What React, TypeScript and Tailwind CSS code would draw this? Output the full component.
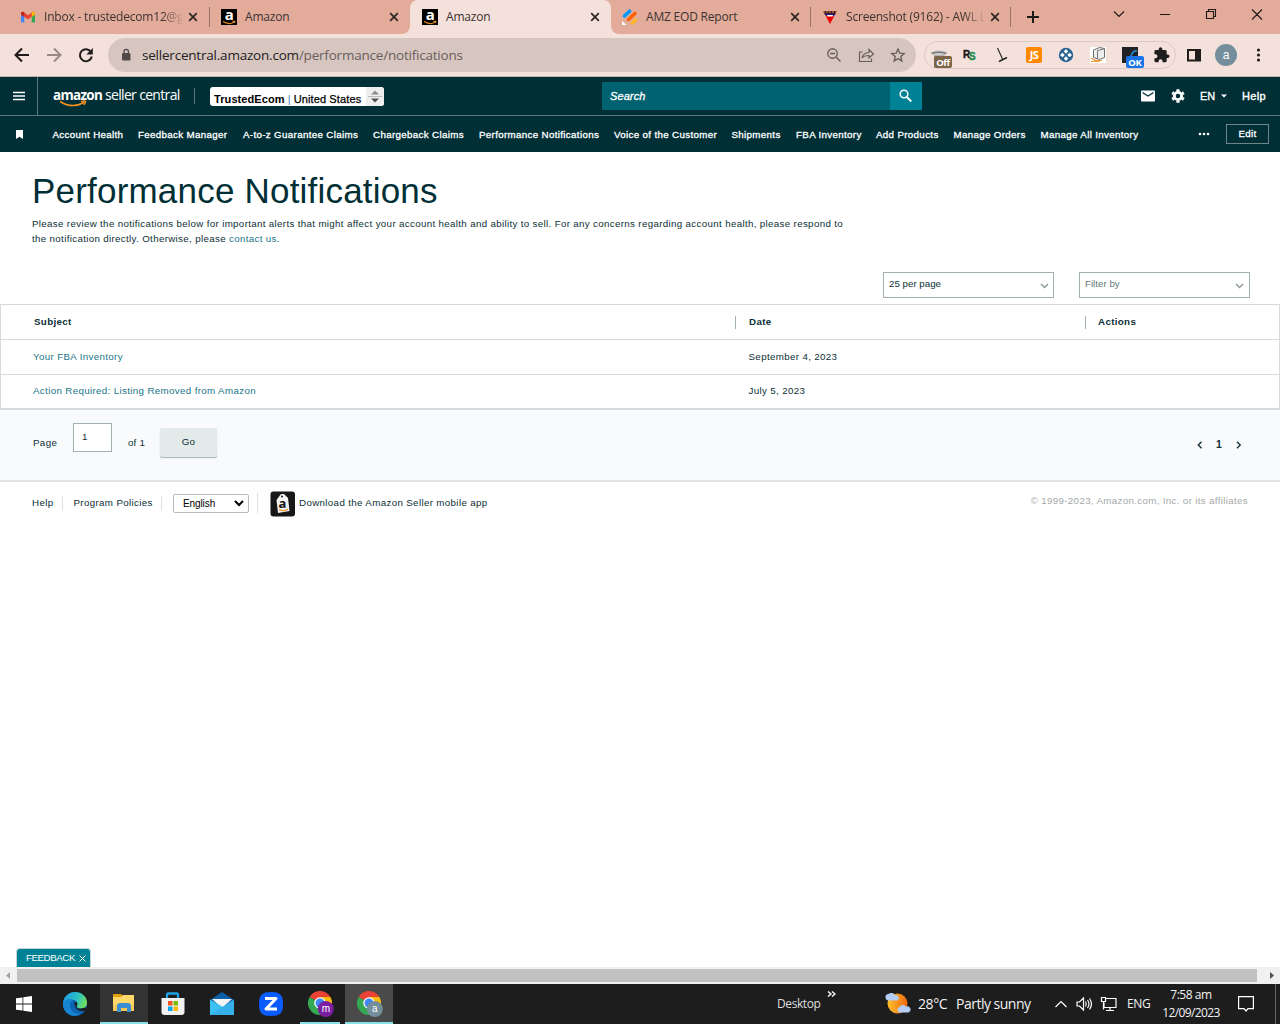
import React from 'react';

const UI = "font-['Open_Sans','Noto_Sans',sans-serif]";

function Close({ className = '' }: { className?: string }) {
  return (
    <svg className={'shrink-0 ' + className} width="10" height="10" viewBox="0 0 10 10" stroke="#2c2624" strokeWidth="1.7">
      <path d="M1.2 1.2L8.8 8.8M8.8 1.2L1.2 8.8" />
    </svg>
  );
}

function AmazonIcon() {
  return (
    <svg className="shrink-0" width="16" height="16" fill="none">
      <path fill="#000" d="M0 0h16v16H0z" />
      <text x="8.2" y="11" textAnchor="middle" fontSize="15" fontWeight="700" fill="#fff" fontFamily="Open Sans">a</text>
      <path d="M2 12.600Q8 16.300 13.200 12.900M11.500 12.300h2.300l-.4 1.600" stroke="#d98a23" strokeWidth="1.200" />
    </svg>
  );
}

function Gmail() {
  return (
    <svg width="16" height="16" viewBox="0 0 16 16" className="shrink-0">
      <path fill="#4285f4" d="M1 4.5L4.3 7v6.500H2A1 1 0 0 1 1 12.500z" />
      <path fill="#34a853" d="M15 4.500L11.700 7v6.500H14a1 1 0 0 0 1-1z" />
      <path fill="#ea4335" d="M1 4.500C1 2.800 2.600 2.200 3.900 3.200L8 6.300l4.100-3.100C13.400 2.200 15 2.800 15 4.500v.8L8 10.500 1 5.300z" />
      <path fill="#fbbc04" d="M11.700 3.500C13.400 2.200 15 2.800 15 4.500v.9L11.700 8z" />
      <path fill="#c5221f" d="M4.300 3.500C2.600 2.200 1 2.800 1 4.500v.9L4.300 8z" />
    </svg>
  );
}

function Jot() {
  return (
    <svg width="16" height="16" viewBox="0 0 16 16" className="shrink-0" strokeLinecap="round">
      <path stroke="#0099ff" strokeWidth="3.600" d="M2.500 7L7.500 2.200" />
      <path stroke="#ff6100" strokeWidth="3.600" d="M6.500 10.500L13 4.500" />
      <path stroke="#ffb629" strokeWidth="3.600" d="M10.500 13.800l3-2.800" />
      <path fill="#fff" d="M0 12l4.500 4H0z" />
    </svg>
  );
}

function Awl() {
  return (
    <svg width="16" height="16" viewBox="0 0 16 16" className="shrink-0">
      <path fill="#4a1238" d="M1 2h14l-2 4H3z" />
      <path stroke="#d9a520" strokeDasharray="2 1" d="M1 3h14" />
      <path fill="#1a237e" d="M3 5h10l-1 2H4z" />
      <path fill="#fff" d="M5 6h6l-.7 2H5.700z" />
      <path fill="#f00000" d="M3.500 6.500l2 1h5l2-1L8 15z" />
    </svg>
  );
}

function Tab({ icon, label, cls, pl, fade }: { icon: React.ReactNode; label: string; cls: string; pl: string; fade?: boolean }) {
  return (
    <div className={'flex h-[34px] shrink-0 items-center ' + cls + ' ' + pl}>
      {icon}
      <span
        className={
          'ml-2 w-[138px] shrink-0 whitespace-nowrap text-[12px] leading-[34px] tracking-[-0.2px] text-[#3c3331] ' +
          (fade ? '[mask-image:linear-gradient(to_right,black_118px,transparent_140px)]' : '')
        }
      >
        {label}
      </span>
      <Close className="ml-[6px]" />
    </div>
  );
}

function TabStrip() {
  return (
    <div className={'flex h-[34px] bg-[#e2ab9a] ' + UI}>
      <Tab icon={<Gmail />} label="Inbox - trustedecom12@g" cls="w-[209px]" pl="pl-5" fade />
      <div className="mt-[7px] h-5 w-px bg-[#94736a]" />
      <div className="w-[200px] bg-[#f5e1db]">
        <div className="rounded-br-lg bg-[#e2ab9a]">
          <Tab icon={<AmazonIcon />} label="Amazon" cls="w-[200px]" pl="pl-[11px]" />
        </div>
      </div>
      <div className="w-[201px] rounded-t-lg bg-[#f5e1db]">
        <Tab icon={<AmazonIcon />} label="Amazon" cls="w-[201px]" pl="pl-3" />
      </div>
      <div className="w-[199px] bg-[#f5e1db]">
        <div className="rounded-bl-lg bg-[#e2ab9a]">
          <Tab icon={<Jot />} label="AMZ EOD Report" cls="w-[199px]" pl="pl-[11px]" />
        </div>
      </div>
      <div className="mt-[7px] h-5 w-px bg-[#94736a]" />
      <Tab icon={<Awl />} label="Screenshot (9162) - AWL L" cls="w-[199px]" pl="pl-[11px]" fade />
      <div className="mt-[7px] h-5 w-px bg-[#94736a]" />
      <svg width="269" height="34" viewBox="1011 0 269 34" fill="none" stroke="#1f1a18">
        <path strokeWidth="2" d="M1027 17h12M1033 11v12" />
        <path strokeWidth="1.100" d="M1114 11.500l5 5 5-5M1160 14.500h10M1206.500 11.500h7v7h-7zM1208.500 11.500v-2h7v7h-2M1252 9.500l10 10M1262 9.500l-10 10" />
      </svg>
    </div>
  );
}

function Extensions() {
  return (
    <svg width="252" height="28" viewBox="0 0 252 28" fill="none">
      <path fill="#b5b2b0" d="M9 11h12l-1 9h-9z" />
      <ellipse cx="15" cy="11.500" rx="7.500" ry="2.500" fill="#d2d2d2" />
      <path stroke="#777" strokeWidth="1.500" d="M7.500 12.500q7-2.500 15 0" />
      <rect x="10" y="15" width="18" height="12" rx="2" fill="#7c6547" />
      <text x="19" y="25" textAnchor="middle" fontSize="9.500" fontWeight="700" fill="#fff" fontFamily="Open Sans" letterSpacing="-.5">Off</text>
      <text x="39" y="17" fontSize="10" fontWeight="700" fill="#151515" stroke="#151515" strokeWidth=".4" fontFamily="Liberation Sans">R</text>
      <text x="45" y="19" fontSize="10" fontWeight="700" fill="#1c8a47" stroke="#1c8a47" strokeWidth=".4" fontFamily="Liberation Sans">S</text>
      <path stroke="#222" strokeWidth="1.100" d="M73.500 7l5 11" />
      <path stroke="#222" strokeWidth="1.500" d="M75 20.500l8-4" />
      <rect x="102" y="6" width="16" height="16" rx="2" fill="#ff8800" />
      <text x="110" y="18" textAnchor="middle" fontSize="11" fontWeight="700" fill="#fff" fontFamily="Open Sans" letterSpacing="-.5">JS</text>
      <circle cx="142" cy="14" r="7.200" fill="#2a6290" />
      <path fill="#fff" d="M142 8l2.200 2.500-2.200 2.200-2.200-2.200zM142 20l2.200-2.500-2.200-2.200-2.200 2.200zM136 14l2.500-2.200 2.200 2.200-2.200 2.200zM148 14l-2.500-2.200-2.200 2.200 2.200 2.200z" />
      <rect x="166" y="6" width="16" height="16" fill="#fff" />
      <path stroke="#6b6b6b" fill="#eee" d="M169.500 9l6-2.500 5 1v9l-5 2-6-2z" />
      <path stroke="#777" d="M173.500 9.500l6.500-1.500M173.500 9.500v8" />
      <path stroke="#f09a40" strokeWidth="1.200" d="M167 17q5 4 11 2M167 20.500h9" />
      <rect x="198" y="6" width="16" height="16" fill="#202326" />
      <path stroke="#2786cf" strokeWidth="1.800" d="M213 10q-4-1-6 5" />
      <rect x="202" y="15" width="18" height="12" rx="2" fill="#1a73e8" />
      <text x="211" y="25" textAnchor="middle" fontSize="9.500" fontWeight="700" fill="#fff" fontFamily="Open Sans" letterSpacing="-.3">OK</text>
      <g transform="translate(229 5.500) scale(.72)">
        <path fill="#1e1e1e" d="M20.500 11H19V7a2 2 0 0 0-2-2h-4V3.500a2.500 2.500 0 0 0-5 0V5H4a2 2 0 0 0-2 2v3.800h1.500a2.700 2.700 0 0 1 0 5.400H2V20a2 2 0 0 0 2 2h3.800v-1.500a2.700 2.700 0 0 1 5.400 0V22H17a2 2 0 0 0 2-2v-4h1.500a2.500 2.500 0 0 0 0-5z" />
      </g>
    </svg>
  );
}

function Toolbar() {
  return (
    <div className={'flex h-[43px] items-center border-b border-[#c2b2ad] bg-[#f5e1db] ' + UI}>
      <svg width="108" height="34" viewBox="0 0 108 34" fill="none" strokeWidth="2">
        <path stroke="#201c1b" d="M29 17H16M22 10.500L15.500 17l6.500 6.500" />
        <path stroke="#978a86" d="M47 17h13M54 10.500l6.500 6.500-6.500 6.500" />
        <path stroke="#201c1b" d="M91 14a6 6 0 1 0 .8 4.500" />
        <path fill="#201c1b" d="M92.800 10v6.500h-6.500z" />
      </svg>
      <div className="flex h-[34px] w-[808px] items-center rounded-full bg-[#d7c6c0]">
        <svg className="ml-3 shrink-0" width="12" height="16" viewBox="0 0 12 16">
          <rect x="2" y="6" width="8.500" height="7.500" rx="1" fill="#504b49" />
          <path d="M4 7V4.500a2.200 2.200 0 0 1 4.400 0V7" fill="none" stroke="#504b49" strokeWidth="1.300" />
        </svg>
        <span className="ml-[10px] w-[560px] whitespace-nowrap text-[13.500px] leading-8 tracking-[-0.21px] text-[#68605d]">
          <span className="text-[#242120]">sellercentral.amazon.com</span>/performance/notifications
        </span>
        <svg className="ml-auto mr-2 shrink-0" width="84" height="20" viewBox="824 0 84 20" fill="none" stroke="#685f5d" strokeWidth="1.400">
          <circle cx="832.500" cy="8.500" r="4.700" />
          <path d="M836 12l4.500 4.500M830 8.500h5" />
          <path strokeWidth="1.200" d="M862.500 7h-3v9.500h12v-3M862 13q1-5 7-5.500V4.500l4.500 4.500-4.500 4v-2.500q-5 0-7 2.500z" />
          <path d="M898 4l1.700 4.200 4.500.4-3.400 3 1 4.400-3.800-2.400-3.800 2.400 1-4.400-3.400-3 4.500-.4z" />
        </svg>
      </div>
      <div className="ml-2 h-7 w-[252px] rounded-full border border-[#dccac5]">
        <div className="-ml-px -mt-px"><Extensions /></div>
      </div>
      <svg className="ml-[10px]" width="16" height="16" fill="none"><path d="M2 3h12v10.500H2z" stroke="#201c1b" strokeWidth="2" /><path d="M9 2h6v12H9z" fill="#201c1b" /></svg>
      <span className="ml-[13px] flex h-[22px] w-[22px] items-center justify-center rounded-full bg-[#748f9b] pb-px font-['Liberation_Sans',sans-serif] text-[12px] text-white">a</span>
      <svg className="ml-[17px]" width="8" height="16" fill="#201c1b"><circle cx="4.500" cy="3" r="1.600" /><circle cx="4.500" cy="8" r="1.600" /><circle cx="4.500" cy="13" r="1.600" /></svg>
    </div>
  );
}

function Masthead() {
  return (
    <div className="flex h-[39px] items-center border-b border-[#5a777b] bg-[#002f36] text-white">
      <div className="flex h-[38px] w-[38px] items-center border-r border-[#5a777b]">
        <svg className="ml-[13px]" width="12" height="10"><path d="M0 1.500h12M0 5h12M0 8.500h12" stroke="#fff" strokeWidth="1.400" /></svg>
      </div>
      <div className="relative ml-[15px] h-[26px] w-[141px] whitespace-nowrap font-['Open_Sans',sans-serif] leading-[22px]">
        <span className="inline-block w-[52px] text-[13.500px] font-bold tracking-[-0.7px]">amazon</span>
        <span className="text-[14px] tracking-[-0.67px]">seller central</span>
        <svg className="absolute left-[7px] top-[17px]" width="28" height="8" fill="none" stroke="#f49321" strokeWidth="1.500">
          <path d="M0 1.500q12 7.500 24 1M21 1.500q5-1 4.500.2T24 5" />
        </svg>
      </div>
      <div className="h-4 w-px bg-[#5a777b]" />
      <div className="ml-[15px] mt-px flex h-[19px] w-[174px] items-center overflow-hidden rounded-[3px] bg-white text-black">
        <span className="ml-1 mt-[6px] w-[152px] whitespace-nowrap text-[11px] leading-[13px]"><b className="tracking-[0.09px]">TrustedEcom</b> <span className="text-[#3f88c5]">|</span> <span className="tracking-[0.12px] [-webkit-text-stroke:0.25px_black]">United States</span></span>
        <svg width="18" height="19"><path fill="#eeeeee" d="M0 0h18v19H0z" /><path fill="#8c8c8c" d="M5 7.500l4-4 4 4z" /><path stroke="#bbb" d="M2 9.500h14" /><path fill="#505050" d="M5 11.500l4 4 4-4z" /></svg>
      </div>
      <div className="ml-[218px] flex h-7 w-[320px] bg-[#006170]">
        <span className="w-[288px] pl-2 text-[11px] italic leading-7 tracking-[0.1px] [-webkit-text-stroke:0.3px_white]">Search</span>
        <svg width="32" height="28" fill="none" stroke="#fff" strokeWidth="1.500"><path fill="#008296" stroke="none" d="M0 0h32v28H0z" /><circle cx="14" cy="12" r="3.800" /><path d="M16.800 15l4.500 4.500" strokeWidth="1.800" /></svg>
      </div>
      <svg className="ml-[219px]" width="14" height="12"><rect y=".5" width="14" height="11" rx="1" fill="#fff" /><path d="M1.500 2.500L7 6l5.500-3.500" fill="none" stroke="#002f36" strokeWidth="1.300" /></svg>
      <svg className="ml-4" width="14" height="14" viewBox="0 0 14 14" fill="none">
        <circle cx="7" cy="7" r="3.700" stroke="#fff" strokeWidth="2.800" />
        <path stroke="#fff" strokeWidth="3.200" d="M7 .3v2.200M7 11.500v2.200M1.200 3.700l1.600 1M11.200 9.300l1.600 1M1.200 10.300l1.600-1M11.200 4.700l1.600-1" />
      </svg>
      <span className="ml-[15px] w-[21px] text-[11px] [-webkit-text-stroke:0.3px_white]">EN</span>
      <svg width="6" height="4"><path d="M0 .5h6l-3 3z" fill="#fff" /></svg>
      <span className="ml-[15px] text-[11px] tracking-[0.3px] [-webkit-text-stroke:0.4px_white]">Help</span>
    </div>
  );
}

const NAV: [string, string][] = [
  ['Account Health', 'w-[85.5px]'],
  ['Feedback Manager', 'w-[105px]'],
  ['A-to-z Guarantee Claims', 'w-[130px]'],
  ['Chargeback Claims', 'w-[106px]'],
  ['Performance Notifications', 'w-[135px]'],
  ['Voice of the Customer', 'w-[117.5px]'],
  ['Shipments', 'w-[64.5px]'],
  ['FBA Inventory', 'w-[80px]'],
  ['Add Products', 'w-[77.500px]'],
  ['Manage Orders', 'w-[87px]'],
  ['Manage All Inventory', 'w-[158px]'],
];

function Nav() {
  return (
    <div className="flex h-9 items-center bg-[#002f36] text-[9.75px] text-white">
      <svg className="ml-4" width="7" height="9"><path d="M0 0h7v9L3.500 6.800 0 9z" fill="#fff" /></svg>
      <div className="ml-[29.5px] flex pt-[2px] tracking-[0.34px]">
        {NAV.map(([t, w]) => (
          <span key={t} className={'shrink-0 whitespace-nowrap [-webkit-text-stroke:0.3px_white] ' + w}>{t}</span>
        ))}
      </div>
      <svg className="-ml-px" width="12" height="4" fill="#fff"><circle cx="2" cy="2" r="1.300" /><circle cx="6" cy="2" r="1.300" /><circle cx="10" cy="2" r="1.300" /></svg>
      <div className="ml-auto mr-[11px] flex h-5 w-[43px] items-center justify-center border border-[#6f8689] tracking-[0.3px] [-webkit-text-stroke:0.3px_white]">Edit</div>
    </div>
  );
}

function Chevron() {
  return <svg width="9" height="6" fill="none" stroke="#8d9c9d" strokeWidth="1.500"><path d="M1 1l3.500 3.500L8 1" /></svg>;
}

function Row({ subject, date, cls }: { subject: string; date: string; cls: string }) {
  return (
    <div className={'flex items-center border-t border-[#d5dbdb] ' + cls}>
      <span className="w-[747.5px] pl-8 text-[#1b7688]">{subject}</span>
      <span>{date}</span>
    </div>
  );
}

function PageBody() {
  return (
    <div className="flex h-[815px] flex-col bg-white text-[9.75px] tracking-[0.35px] text-[#0d2f36]">
      <h1 className="ml-8 mt-[18px] h-[42px] text-[35px] leading-[42px] tracking-[0.2px] text-[#002f36]">Performance Notifications</h1>
      <p className="ml-8 mt-1 whitespace-nowrap leading-[15px] tracking-[0.334px]">
        Please review the notifications below for important alerts that might affect your account health and ability to sell. For any concerns regarding account health, please respond to
        <br />
        the notification directly. Otherwise, please <span className="text-[#1b7688]">contact us</span>.
      </p>
      <div className="mt-[26px] flex justify-end pr-[30px] tracking-normal">
        <div className="mr-[25px] flex h-[26px] w-[171px] items-center justify-between border border-[#a2b0b1] pl-[5px] pr-1"><span className="mb-px">25 per page</span><div className="mt-[2px]"><Chevron /></div></div>
        <div className="flex h-[26px] w-[171px] items-center justify-between border border-[#a2b0b1] pl-[5px] pr-[5px] text-[#64787b]"><span className="mb-px">Filter by</span><div className="mt-[2px]"><Chevron /></div></div>
      </div>
      <div className="mt-[6px] h-[106px] border border-b-2 border-[#d5dbdb]">
        <div className="flex h-[34px] items-center font-bold">
          <span className="w-[734px] pl-[33px]">Subject</span>
          <span className="mr-[13px] h-[13px] w-px bg-[#a2b0b1]" />
          <span className="w-[336px]">Date</span>
          <span className="mr-3 h-[13px] w-px bg-[#a2b0b1]" />
          <span>Actions</span>
        </div>
        <Row subject="Your FBA Inventory" date="September 4, 2023" cls="h-[35px]" />
        <Row subject="Action Required: Listing Removed from Amazon" date="July 5, 2023" cls="h-[34px]" />
      </div>
      <div className="flex h-[72px] items-start border-b-2 border-[#dfe3e4] bg-[#f8fafb] pl-[33px]">
        <span className="mt-[26px] w-10">Page</span>
        <span className="mt-[13px] h-[29px] w-[39px] border border-[#a2b0b1] bg-white pl-2 pt-[6px]">1</span>
        <span className="ml-4 mt-[26px] w-8 tracking-[0.2px]">of 1</span>
        <span className="mt-[18px] flex h-[29px] w-[57px] justify-center rounded-[2px] bg-[#e3ebea] pt-[7px] shadow-[0_1px_1px_#aab2b3]">Go</span>
        <svg className="ml-[980px] mt-[31px]" width="6" height="8" fill="none" stroke="#17353b" strokeWidth="1.400"><path d="M4.500.8L1.300 4l3.200 3.200" /></svg>
        <span className="ml-[13px] mt-[27px] w-[20px] text-[10.500px] font-bold">1</span>
        <svg className="mt-[31px]" width="6" height="8" fill="none" stroke="#17353b" strokeWidth="1.400"><path d="M1 .8L4.200 4 1 7.200" /></svg>
      </div>
      <div className="flex h-[42px] items-center pl-8">
        <span className="w-[30px]">Help</span>
        <span className="h-[15px] w-px bg-[#dde1e1]" />
        <span className="ml-[10.500px] w-[87.500px] whitespace-nowrap">Program Policies</span>
        <span className="h-[15px] w-px bg-[#dde1e1]" />
        <span className="ml-[11px] flex h-[19px] w-[76px] items-center justify-between rounded-[2px] border border-[#b9b9b9] pl-[9px] pr-1 text-[10px] tracking-[-0.1px] text-black">
          English
          <svg width="10" height="7" fill="none" stroke="#000" strokeWidth="2"><path d="M1 1l4 4 4-4" /></svg>
        </span>
        <span className="ml-2 h-5 w-px bg-[#dde1e1]" />
        <svg className="ml-3 mt-px" width="26" height="26" viewBox="0 0 26 26">
          <rect x=".5" y=".5" width="24.500" height="25" rx="3" fill="#171717" />
          <path d="M6.500 9L11 3h3l4 4L19.500 20 8 22z" fill="#f5f5f5" />
          <circle cx="12" cy="5.500" r="1" fill="#171717" />
          <text x="8.400" y="16.500" fontSize="13" fontWeight="700" fontFamily="Open Sans" fill="#111">a</text>
          <path d="M9 18.500q5 2.500 9-.5" fill="none" stroke="#f49321" strokeWidth="1.300" />
        </svg>
        <span className="ml-[3px] whitespace-nowrap">Download the Amazon Seller mobile app</span>
        <span className="ml-auto mr-8 mb-[3px] whitespace-nowrap tracking-[0.335px] text-[#a5a8a8]">© 1999-2023, Amazon.com, Inc. or its affiliates</span>
      </div>
      <div className="ml-4 mt-auto flex h-[19px] w-[75px] items-center rounded-t border border-b-0 border-[#c5d4d6] bg-[#008296] pl-[9px] tracking-[-0.45px] text-white">
        FEEDBACK
        <svg className="ml-1" width="7" height="7" stroke="#fff"><path d="M.5.5l6 6M6.500.5l-6 6" /></svg>
      </div>
    </div>
  );
}

function Scrollbar() {
  return (
    <div className="flex h-[17px] items-center bg-[#f1f1f1]">
      <svg width="17" height="17"><path d="M10 5v7L6 8.500z" fill="#a3a3a3" /></svg>
      <div className="h-[13px] w-[1240px] bg-[#c1c1c1]" />
      <svg width="23" height="17"><path d="M13 5v7l4-3.500z" fill="#505050" /></svg>
    </div>
  );
}

function ChromeIcon({ letter, color }: { letter: string; color: string }) {
  return (
    <svg width="26" height="28" viewBox="0 0 26 28">
      <path fill="#ea4335" d="M12 12L1.600 6A12 12 0 0 1 22.400 6z" />
      <path fill="#34a853" d="M12 12l0 12A12 12 0 0 1 1.600 6z" />
      <path fill="#fbbc04" d="M12 6h10.400A12 12 0 0 1 12 24l5-9z" />
      <circle cx="12" cy="12" r="5.800" fill="#fff" /><circle cx="12" cy="12" r="4.500" fill="#4285f4" />
      <circle cx="17.800" cy="18" r="8" fill={color} />
      <text x="17.800" y="21" fontSize="10" fill="#fff" fontFamily="Liberation Sans" textAnchor="middle">{letter}</text>
    </svg>
  );
}

function Taskbar() {
  return (
    <div className={'flex h-10 items-stretch bg-[#1d1d1d] text-[12px] text-[#f2f2f2] ' + UI}>
      <div className="flex w-[50px] items-center pl-4">
        <svg width="16" height="16" fill="#fff"><path d="M0 2.300L6.500 1.400v6.200H0zM7.300 1.200L16 0v7.600H7.300zM0 8.400h6.500v6.200L0 13.700zM7.300 8.400H16V16l-8.700-1.200z" /></svg>
      </div>
      <div className="flex w-[50px] items-center justify-center">
        <svg width="24" height="24" viewBox="0 0 24 24">
          <defs>
            <linearGradient id="eg" x1="0" x2="1" y1=".2" y2=".5"><stop stopColor="#1b9de2" /><stop offset=".6" stopColor="#2fc2c5" /><stop offset="1" stopColor="#6fe05a" /></linearGradient>
          </defs>
          <circle cx="12" cy="12" r="12" fill="#0c64b5" />
          <path d="M0 11C1 4 6 0 12 0c7 0 12 5 12 10.500 0 4-3 6-6 6-3.500 0-5-1.500-4-3 1-2 0-5-3-5.500C6 7 2 8 0 11z" fill="url(#eg)" />
          <path d="M0 11c2-4 7-5 10-3-4 2-4 8 0 12 3 2 6 2 8 1-5 5-14 3-17-4-1-2-1-4-1-6z" fill="#1784d1" />
          <path d="M11.500 10c-1.500 2.500 0 6 4 7 3 .8 5 .3 7-.7l1.300.2-1.300 2.300c-7 1.500-13-2.800-11-8.800z" fill="#1d1d1d" />
          <path d="M11.500 10C14 9.500 15 11.500 14 13.500c-1 2 1 3 4 3l5-1-1 1.800c-6 1-11-2-10.500-7.300z" fill="#1d1d1d" />
        </svg>
      </div>
      <div className="flex w-12 items-center justify-center border-b-2 border-[#85e0e8] bg-[#333333]">
        <svg width="22" height="20" viewBox="0 0 22 20">
          <path fill="#e3a008" d="M0 1h8l2 2v4H0z" /><path fill="#ffd869" d="M0 4h8l2-2h11v16H0z" /><path fill="#f6c957" d="M0 12h21v6H0z" />
          <path fill="#3a8fd4" d="M4 19v-6q0-3 3-3h8q3 0 3 3v6h-4v-4H8v4z" />
        </svg>
      </div>
      <div className="flex w-[50px] items-center justify-center">
        <svg width="24" height="24" viewBox="0 0 24 24"><path d="M6 6V2.500q0-1 1-1h9q1 0 1 1V6" fill="none" stroke="#21a1e5" strokeWidth="2.300" /><path fill="#f1f1f1" d="M.5 6h23v14q0 3-3 3h-17q-3 0-3-3z" /><path fill="#f25022" d="M7 9h4.500v4.500H7z" /><path fill="#7fba00" d="M12.500 9H17v4.500h-4.500z" /><path fill="#00a4ef" d="M7 14.500h4.500V19H7z" /><path fill="#ffb900" d="M12.500 14.500H17V19h-4.500z" /></svg>
      </div>
      <div className="flex w-12 items-center justify-center">
        <svg width="24" height="24" viewBox="0 0 24 24"><path fill="#0d5ea8" d="M0 8l12-8 12 8v7H0z" /><path fill="#f5f5f5" d="M2 7h20L12 16z" /><path fill="#3cc0f0" d="M0 7.500L13 15l-9 8H0z" /><path fill="#35b0e8" d="M24 7.500V23H0z" /></svg>
      </div>
      <div className="flex w-[50px] items-center justify-center">
        <svg width="24" height="24" viewBox="0 0 24 24"><path fill="#0b5cff" d="M12 0c9 0 12 3 12 12s-3 12-12 12S0 21 0 12 3 0 12 0z" /><path d="M6 6.500h11L7 17h11" fill="none" stroke="#fff" strokeWidth="3" strokeLinejoin="round" /></svg>
      </div>
      <div className="ml-1 flex w-10 items-center justify-center border-b-2 border-[#85e0e8] pl-[2px] pt-[3px]"><ChromeIcon letter="m" color="#7b1fa2" /></div>
      <div className="ml-[5px] flex w-12 items-center justify-center border-b-2 border-[#85e0e8] bg-[#4a4a4a] pl-[2px] pt-[3px]"><ChromeIcon letter="a" color="#748f9b" /></div>
      <span className="ml-[384px] w-[50px] leading-10 tracking-[-0.4px] text-[#dddddd]">Desktop</span>
      <svg className="mt-[7px]" width="9" height="7" fill="none" stroke="#fff" strokeWidth="1.400"><path d="M1 .5l3 2.500-3 2.500M5 .5L8 3 5 5.500" /></svg>
      <svg className="ml-[49px] mt-[7px]" width="26" height="26" viewBox="0 0 26 26">
        <defs><linearGradient id="sun"><stop stopColor="#ffc02a" /><stop offset="1" stopColor="#ee6a10" /></linearGradient></defs>
        <circle cx="12.500" cy="12.500" r="10" fill="url(#sun)" />
        <path d="M3 9.500a3.300 3.300 0 0 1 .5-6.500 4 4 0 0 1 6.500 1.500 2.500 2.500 0 0 1 2 5zM14 21.500a3 3 0 0 1 .5-5.500 4 4 0 0 1 6.500-.5 3 3 0 0 1 2.500 6z" fill="#b5cdf5" />
      </svg>
      <span className="ml-[7px] w-[38px] whitespace-nowrap text-[14px] leading-10 tracking-[-0.4px]">28°C</span>
      <span className="w-[98px] whitespace-nowrap text-[14px] leading-10 tracking-[-0.5px]">Partly sunny</span>
      <svg className="shrink-0" width="64" height="40" viewBox="1054 0 64 40" fill="none" stroke="#fff" strokeWidth="1.200">
        <path d="M1055.500 23l5.500-5.500 5.500 5.500M1077 18h2.500l4-4v12l-4-4h-2.500zM1085.500 17.500q1.500 2.500 0 5M1087.500 16q3 4 0 8M1089.500 14.500q4 5.500 0 11" />
        <path d="M1106 14.500h10v9h-12v-5M1110 23.500v3M1106 26.500h8M1101.500 13.500h4v4h-4zM1103.500 17.500v8" />
      </svg>
      <span className="ml-[9px] w-[30px] leading-[39px] tracking-[-0.4px]">ENG</span>
      <div className="w-[68px] whitespace-nowrap pt-[2px] text-center text-[12px] leading-[18px] tracking-[-0.45px]">7:58 am<br /><span className="tracking-[-0.6px]">12/09/2023</span></div>
      <svg className="ml-[13px] mt-3 shrink-0" width="16" height="17" fill="none" stroke="#fff" strokeWidth="1.200"><path d="M.6.600h14.800v12H10L8 15l-2-2.400H.6z" /></svg>
      <div className="ml-auto mr-1 w-px bg-[#666]" />
    </div>
  );
}

export default function App() {
  return (
    <div className="h-[1024px] w-[1280px] overflow-hidden bg-white font-['Liberation_Sans',Arial,sans-serif]">
      <TabStrip />
      <Toolbar />
      <Masthead />
      <Nav />
      <PageBody />
      <Scrollbar />
      <Taskbar />
    </div>
  );
}
